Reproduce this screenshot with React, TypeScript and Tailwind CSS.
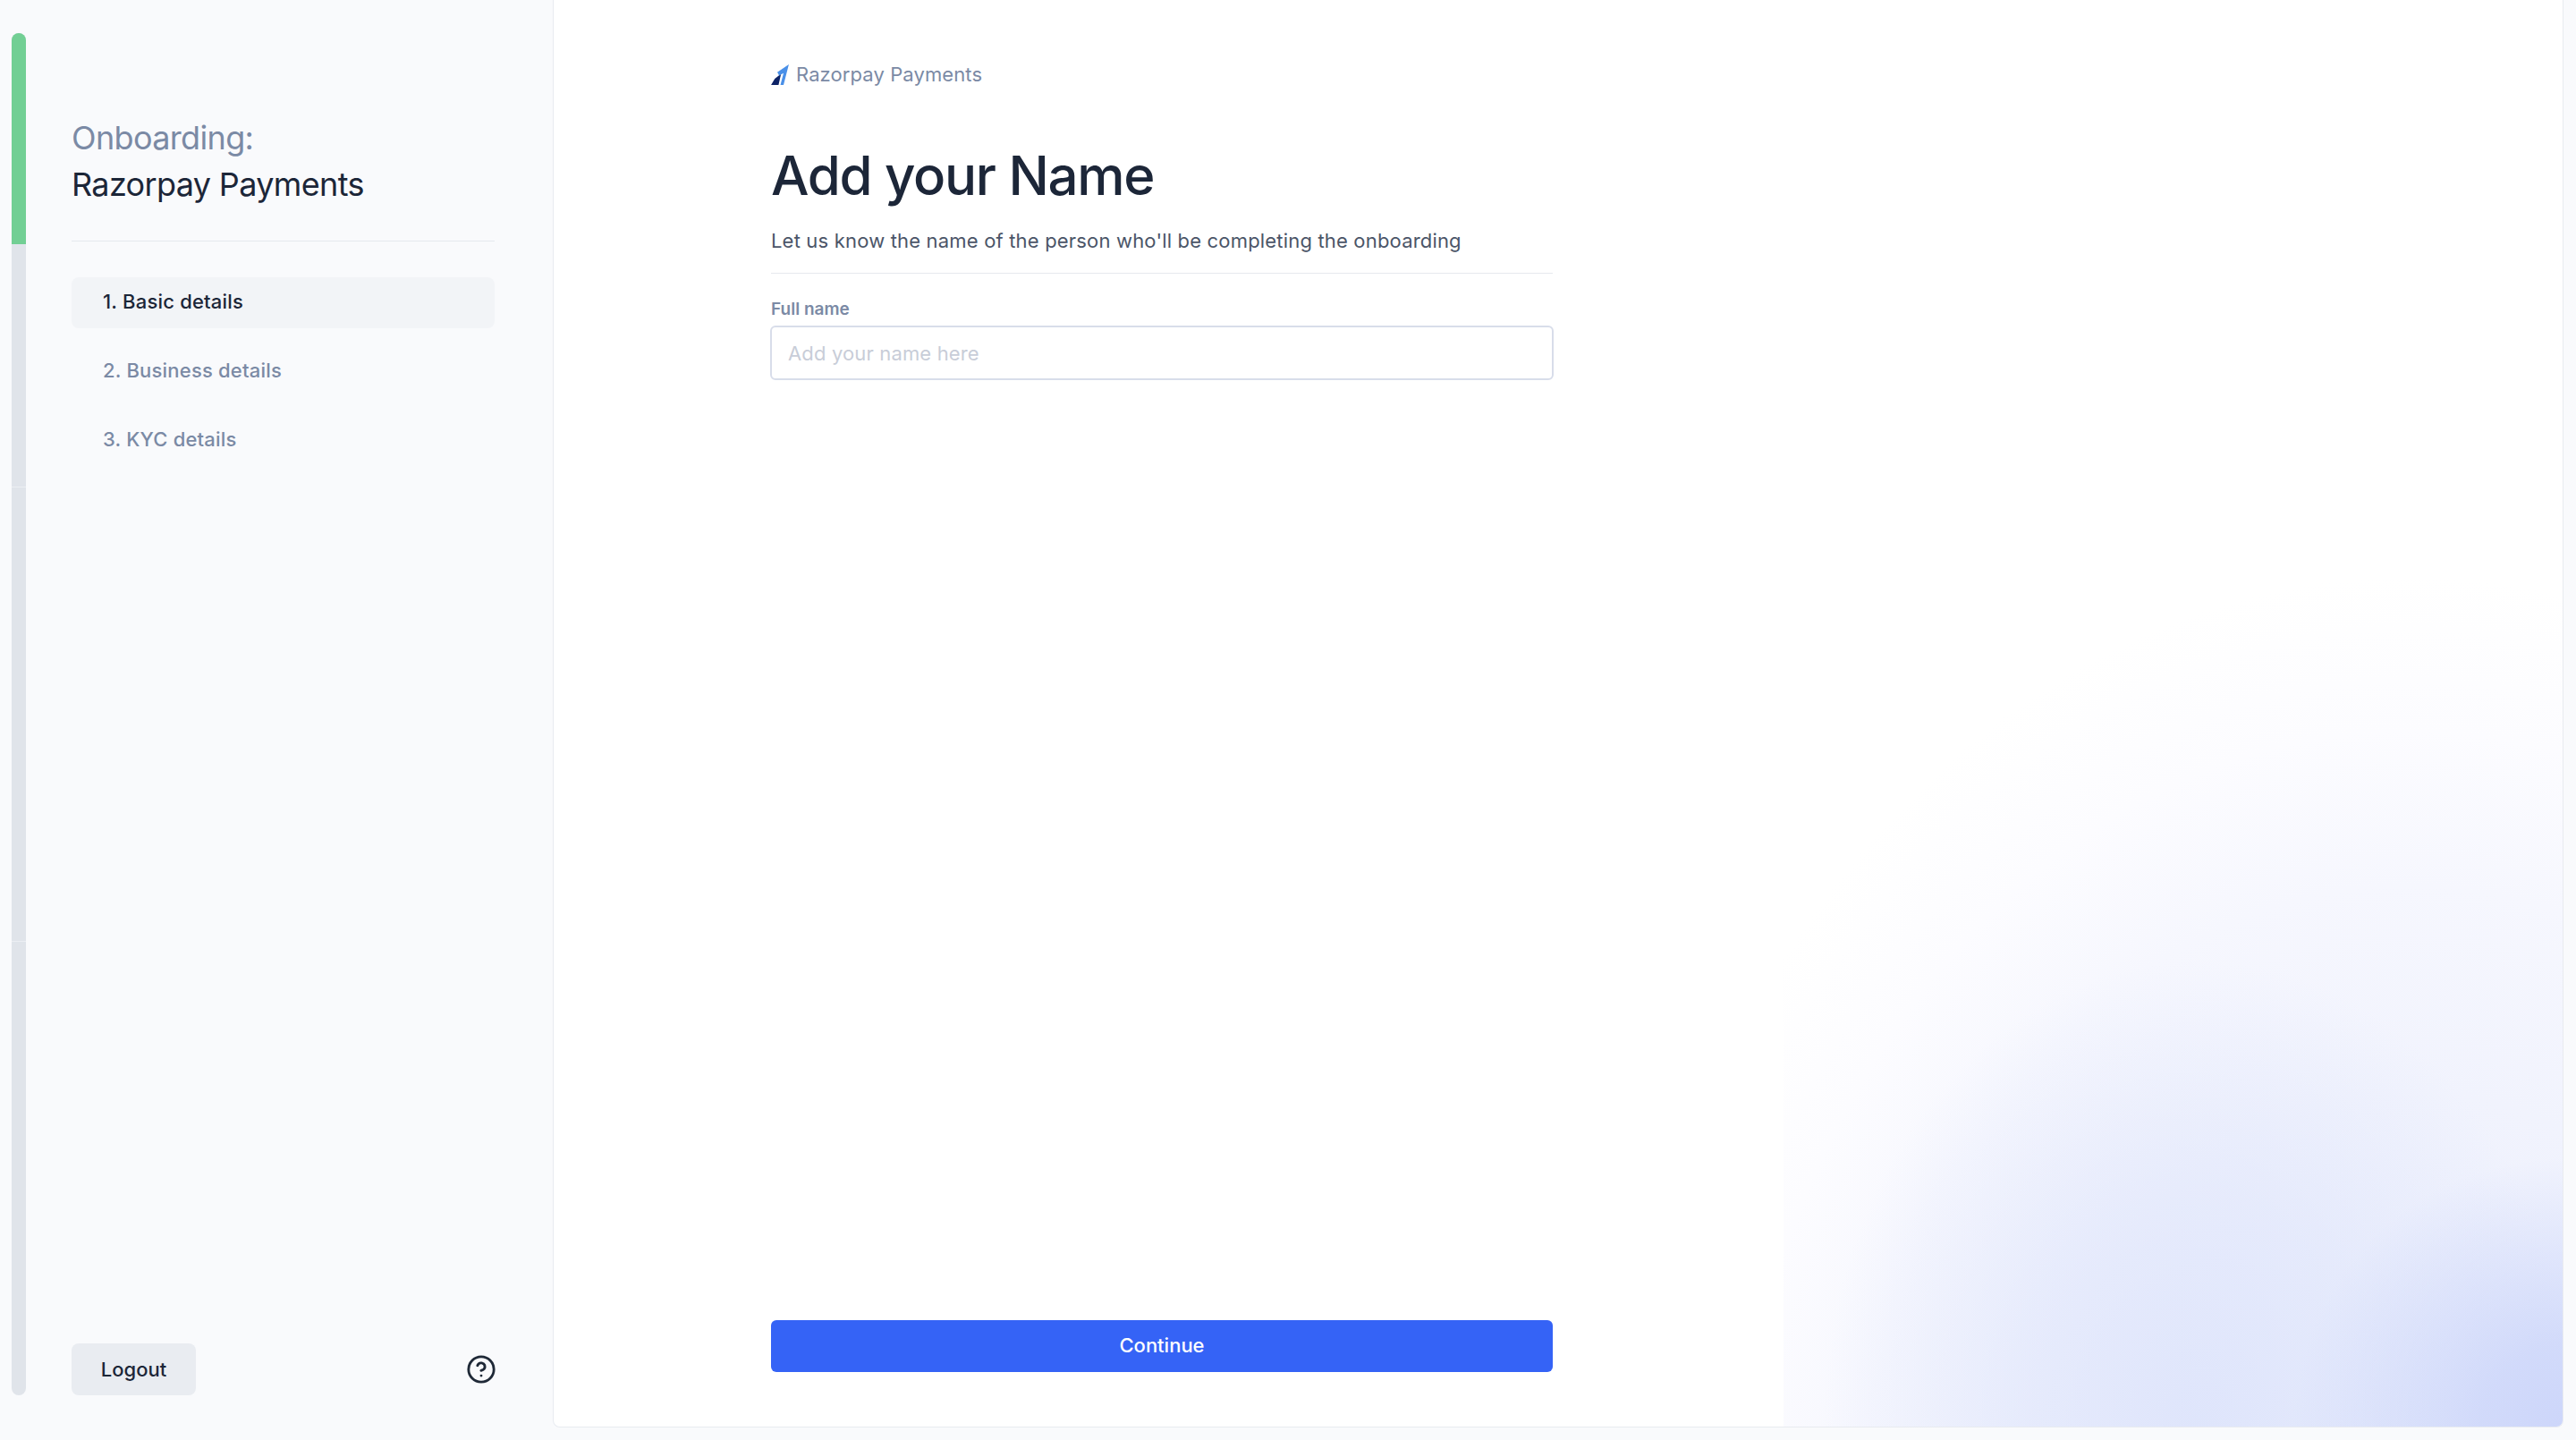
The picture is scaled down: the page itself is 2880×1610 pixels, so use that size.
import { CircleHelp } from 'lucide-react';

const steps = ['1. Basic details', '2. Business details', '3. KYC details'];

function RazorpayMark() {
  return (
    <svg width="20" height="23" viewBox="0 0 57 66" className="shrink-0">
      <path d="M0 66 L12 46 L32 30 L24 66Z" fill="#0d2366" />
      <path d="M20 25 L57 0 L40 66 L30 66 L40 28 L26 36Z" fill="#4a90e8" />
    </svg>
  );
}

export default function App() {
  return (
    <div className="flex h-screen w-full bg-[#f9fafc] font-['Inter',sans-serif]">
      {/* Left: progress rail */}
      <div className="flex w-[80px] shrink-0 pl-[13px] pt-[37px] pb-[50px]">
        <div className="flex w-4 flex-col overflow-hidden rounded-t-lg rounded-b-lg">
          <div className="flex-1 bg-[#e0e4ea]">
            <div className="h-[236px] bg-[#72cf94]" />
          </div>
          <div className="flex-1 border-t border-[#eceff3] bg-[#e0e4ea]" />
          <div className="flex-1 border-t border-[#eceff3] bg-[#e0e4ea]" />
        </div>
      </div>

      {/* Sidebar */}
      <aside className="flex w-[473px] shrink-0 flex-col pb-[50px]">
        <div className="border-b border-[#e6e9ee] pt-[128px] pb-[37px] text-[36px] leading-[52px] tracking-[-0.65px]">
          <div className="text-[#7b8aa5]">Onboarding:</div>
          <div className="text-[#1c2638]">Razorpay Payments</div>
        </div>
        <nav className="mt-[40px] flex flex-col gap-5">
          {steps.map((step, i) => (
            <div
              key={step}
              className={`flex h-[57px] items-center rounded-lg pb-[2px] pl-[35px] text-[22px] font-medium tracking-[0.2px] ${
                i === 0 ? 'bg-[#f2f4f7] text-[#1c2638]' : 'text-[#7b8aa5]'
              }`}
            >
              {step}
            </div>
          ))}
        </nav>
        <div className="mt-auto flex items-center justify-between">
          <button className="h-[58px] w-[139px] rounded-lg bg-[#e9ecf1] text-[22px] font-medium text-[#1c2638]">
            Logout
          </button>
          <CircleHelp size={34} strokeWidth={2} className="-mr-[2px] text-[#1f2937]" />
        </div>
      </aside>

      {/* Main card */}
      <main className="relative mb-[14px] ml-[65px] mr-[14px] flex flex-1 flex-col overflow-hidden rounded-b-lg border-x border-b border-[#e8ebf0] bg-white">
        <div className="absolute bottom-0 right-0 h-[1000px] w-[871px] bg-[radial-gradient(circle_300px_at_871px_1000px,#cdd6fa_0%,#cfd8fae6_30%,#cfd8fa00_100%),radial-gradient(ellipse_420px_520px_at_465px_1000px,#dce3fbd9_0%,#dce3fb80_50%,#dce3fb00_100%),radial-gradient(ellipse_900px_1150px_at_700px_1200px,#e8ecfc_0%,#f1f3fd_50%,#f6f7fe_70%,#fcfcff_85%,#ffffff_100%)]" />
        <div className="relative flex flex-1 flex-col pl-[243px] pb-[61px]">
          <div className="flex w-[874px] flex-1 flex-col">
            <div className="flex items-center gap-[8px] pt-[70px] text-[22px] leading-[26px] tracking-[0.1px] text-[#7b8aa5]">
              <RazorpayMark />
              Razorpay Payments
            </div>
            <h1 className="mt-[64px] text-[60px] leading-[72px] font-medium tracking-[-1.3px] text-[#1c2638]">Add your Name</h1>
            <p className="mt-[22px] text-[22px] leading-[30px] tracking-[0.18px] text-[#4b5568]">
              Let us know the name of the person who'll be completing the onboarding
            </p>
            <div className="mt-[21px] border-t border-[#e6e9ee]" />
            <label className="mt-[28px] text-[19px] leading-[24px] font-semibold text-[#7b8aa5]">Full name</label>
            <input
              placeholder="Add your name here"
              className="mt-[6px] -mx-px h-[61px] rounded-md border-2 border-[#d8ddea] bg-white px-[18px] text-[22px] tracking-[0.15px] outline-none placeholder:text-[#c8cdd8]"
            />
            <button className="mt-auto h-[58px] rounded-md bg-[#3563f6] pb-[2px] text-[22px] font-medium text-white">
              Continue
            </button>
          </div>
        </div>
      </main>
    </div>
  );
}
